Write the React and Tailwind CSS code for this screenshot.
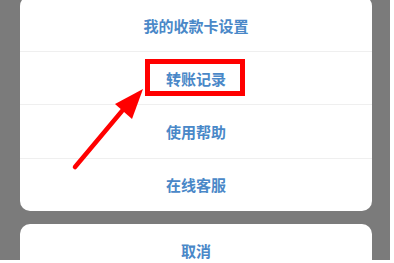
const items = ['我的收款卡设置', '转账记录', '使用帮助', '在线客服']
const heights = ['h-[56px] pt-[5px]', 'h-[53px] pt-[2px]', 'h-[54px] pt-[1px]', 'h-[52px] pt-[1px]']

export default function App() {
  return (
    <div
      className="relative w-[394px] h-[263px] overflow-hidden bg-white"
      style={{ fontFamily: '"Noto Sans CJK SC", "Noto Sans", sans-serif' }}
    >
      <div className="w-[390px] h-[260px] bg-[#7b7b7b] pl-[20px] overflow-hidden">
        <div className="w-[352px] mt-[-4px] rounded-[10px] bg-white overflow-hidden">
          {items.map((label, i) => (
            <div
              key={label}
              className={`${heights[i]} flex items-center justify-center text-[15px] font-semibold text-[#4a88c8] ${
                i < items.length - 1 ? 'border-b border-[#efefef]' : ''
              }`}
            >
              {label}
            </div>
          ))}
        </div>
        <div className="w-[352px] mt-[13px] h-[54px] rounded-[10px] bg-white flex items-start justify-center pt-[16px] text-[15px] font-semibold text-[#4a88c8]">
          取消
        </div>
      </div>

      {/* annotation */}
      <div className="absolute left-[145px] top-[59px] w-[100px] h-[37px] border-[5px] border-[#ff0000]" />
      <svg className="absolute left-0 top-0" width="394" height="263" viewBox="0 0 394 263">
        <line x1="75" y1="167" x2="122" y2="111" stroke="#ff0000" strokeWidth="4.5" strokeLinecap="round" />
        <polygon points="143,89 115,104 132,119" fill="#ff0000" />
      </svg>
    </div>
  )
}
